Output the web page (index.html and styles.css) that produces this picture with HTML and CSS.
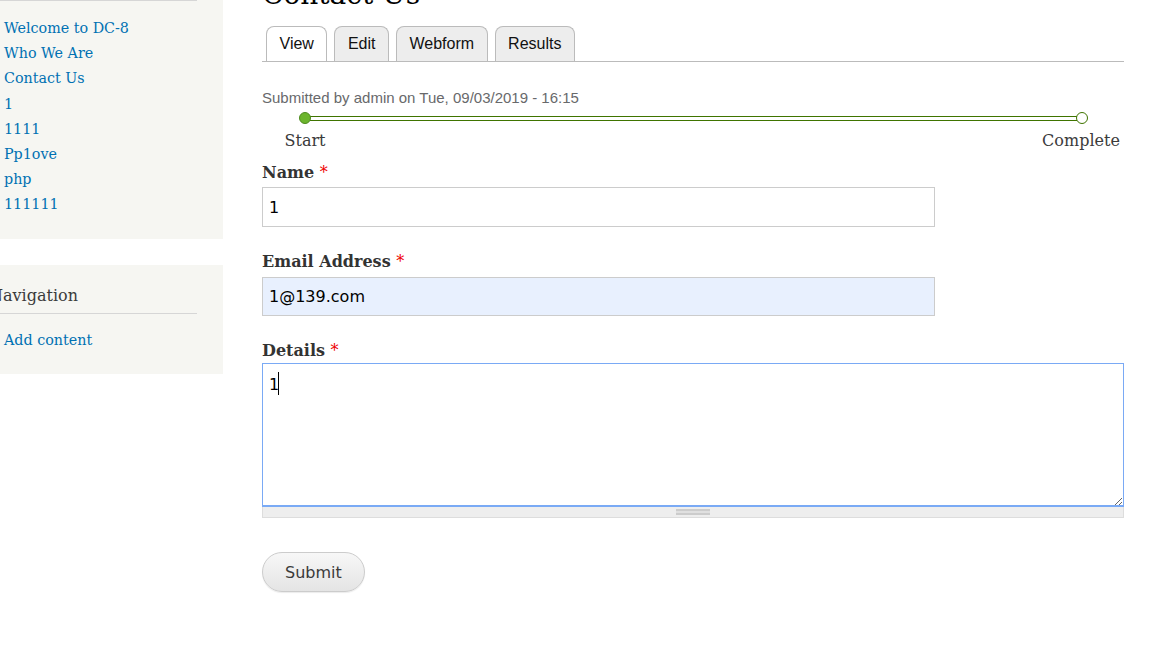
FILE: index.html
```html
<!DOCTYPE html>
<html lang="en">
<head>
<meta charset="utf-8">
<title>Contact Us | DC-8</title>
<link rel="stylesheet" href="styles.css">
</head>
<body>
<div class="page">
  <aside class="sidebar">
    <div class="block block-menu">
      <div class="block-rule"></div>
      <ul class="menu">
        <li><a href="#">Welcome to DC-8</a></li>
        <li><a href="#">Who We Are</a></li>
        <li><a href="#">Contact Us</a></li>
        <li><a href="#">1</a></li>
        <li><a href="#">1111</a></li>
        <li><a href="#">Pp1ove</a></li>
        <li><a href="#">php</a></li>
        <li><a href="#">111111</a></li>
      </ul>
    </div>
    <div class="block block-nav">
      <h2 class="block-title">Navigation</h2>
      <ul class="menu">
        <li><a href="#">Add content</a></li>
      </ul>
    </div>
  </aside>
  <main class="main">
    <h1 class="page-title">Contact Us</h1>
    <ul class="tabs">
      <li class="tab active"><a href="#">View</a></li>
      <li class="tab"><a href="#">Edit</a></li>
      <li class="tab"><a href="#">Webform</a></li>
      <li class="tab"><a href="#">Results</a></li>
    </ul>
    <div class="submitted">Submitted by admin on Tue, 09/03/2019 - 16:15</div>
    <div class="progress">
      <div class="progress-track">
        <span class="dot dot-done"></span>
        <span class="bar"></span>
        <span class="dot dot-todo"></span>
      </div>
      <div class="progress-labels">
        <span class="plabel">Start</span>
        <span class="plabel">Complete</span>
      </div>
    </div>
    <form class="webform">
      <div class="form-item">
        <label class="form-label">Name <span class="req">*</span></label>
        <input class="form-text" type="text" value="1">
      </div>
      <div class="form-item form-item-email">
        <label class="form-label">Email Address <span class="req">*</span></label>
        <input class="form-text autofill" type="text" value="1@139.com">
      </div>
      <div class="form-item form-item-details">
        <label class="form-label">Details <span class="req">*</span></label>
        <div class="textarea-wrap">
          <textarea class="form-textarea">1</textarea>
          <span class="caret"></span>
        </div>
        <div class="grippie"><span class="grip"></span></div>
      </div>
      <div class="actions">
        <button class="submit" type="button">Submit</button>
      </div>
    </form>
  </main>
</div>
</body>
</html>
```
FILE: styles.css
```css
html, body {
  margin: 0;
  padding: 0;
  background: #fff;
  overflow: hidden;
}
body {
  width: 1156px;
  height: 662px;
  font-family: "DejaVu Serif", Georgia, serif;
  color: #3b3b3b;
}
a {
  color: #0071b3;
  text-decoration: none;
}
ul {
  list-style: none;
  margin: 0;
  padding: 0;
}
.page {
  display: flex;
  align-items: flex-start;
  margin-left: -20px;
  gap: 39px;
}
.sidebar {
  width: 243px;
  flex: none;
  display: flex;
  flex-direction: column;
  gap: 26px;
}
.block {
  background: #f6f6f2;
  padding: 0 26px 0 12px;
}
.block-menu {
  padding-bottom: 21px;
}
.block-rule {
  border-top: 1px solid #d6d6d6;
}
.menu {
  padding-left: 12px;
  margin-top: 15px;
  font-size: 14.3px;
  line-height: 25.2px;
}
.block-nav {
  padding-top: 19px;
  padding-bottom: 21px;
}
.block-title {
  margin: 0;
  font-weight: normal;
  font-size: 16px;
  line-height: 24px;
  padding-bottom: 5px;
  border-bottom: 1px solid #d6d6d6;
  color: #3b3b3b;
  text-indent: -3px;
}
.block-nav .menu {
  margin-top: 14px;
}
.main {
  width: 862px;
  flex: none;
}
.page-title {
  margin: -22px 0 14px;
  font-size: 28px;
  line-height: 34px;
  font-weight: normal;
  color: #000;
}
.tabs {
  display: flex;
  gap: 7px;
  padding-left: 4px;
  border-bottom: 1px solid #bbb;
  font-family: "Liberation Sans", Arial, sans-serif;
  font-size: 16px;
}
.tab {
  border: 1px solid #bbb;
  border-bottom: none;
  border-radius: 8px 8px 0 0;
  background: #ededed;
}
.tab a {
  display: block;
  padding: 0 12.5px;
  line-height: 34px;
  color: #111;
}
.tab.active {
  background: #fff;
}
.submitted {
  margin-top: 26px;
  font-family: "Liberation Sans", Arial, sans-serif;
  font-size: 15px;
  line-height: 20px;
  color: #68696b;
}
.progress {
  margin-top: 4px;
}
.progress-track {
  display: flex;
  align-items: center;
  height: 12px;
  padding: 0 36px 0 37px;
}
.bar {
  flex: 1;
  height: 3px;
  border-top: 1px solid #3f7400;
  border-bottom: 1px solid #3f7400;
  background: #fff;
  margin: 0 -1px;
}
.dot {
  width: 10px;
  height: 10px;
  border-radius: 50%;
  border: 1px solid #3f7400;
  flex: none;
  position: relative;
  z-index: 1;
}
.dot-done {
  background: #6cb52d;
  border-color: #4d8a1e;
}
.dot-todo {
  background: #fff;
}
.progress-labels {
  display: flex;
  justify-content: space-between;
  margin-top: 7px;
}
.plabel {
  width: 86px;
  text-align: center;
  font-size: 16px;
  line-height: 20px;
  color: #3b3b3b;
}
.webform {
  margin-top: 12px;
}
.form-item {
  margin-bottom: 25px;
}
.form-label {
  display: block;
  font-weight: bold;
  font-size: 16px;
  line-height: 20px;
  margin-bottom: 4px;
  color: #333;
}
.form-item-email .form-label {
  margin-bottom: 5px;
}
.form-item-details .form-label {
  margin-bottom: 2px;
}
.req {
  color: #e00;
  font-weight: normal;
}
.form-text {
  box-sizing: border-box;
  display: block;
  width: 673px;
  height: 40px;
  margin: 0;
  padding: 0 6px;
  border: 1px solid #ccc;
  border-radius: 0;
  background: #fff;
  font-family: "DejaVu Sans", Verdana, sans-serif;
  font-size: 16px;
  color: #000;
  outline: none;
}
.form-text.autofill {
  height: 39px;
  background: #e8f0fe;
}
.textarea-wrap {
  position: relative;
}
.form-textarea {
  box-sizing: border-box;
  display: block;
  width: 862px;
  height: 144px;
  margin: 0;
  padding: 11px 6px 10px;
  border: 1px solid #7aaaf5;
  box-shadow: inset 0 -1px 0 #7aaaf5;
  border-radius: 0;
  font-family: "DejaVu Sans", Verdana, sans-serif;
  font-size: 16px;
  line-height: 20px;
  color: #000;
  resize: vertical;
  outline: none;
}
.caret {
  position: absolute;
  left: 16px;
  top: 9px;
  width: 1px;
  height: 23px;
  background: #000;
}
.grippie {
  box-sizing: border-box;
  height: 11px;
  background: #eee;
  border: 1px solid #ddd;
  border-top: none;
  display: flex;
  justify-content: center;
  align-items: center;
}
.grip {
  width: 34px;
  height: 2px;
  border-top: 2px solid #ccc;
  border-bottom: 2px solid #ccc;
  background: #e0e0e0;
}
.actions {
  margin-top: 34px;
}
.submit {
  height: 40px;
  padding: 0 22px;
  border: 1px solid #ccc;
  border-radius: 20px;
  background: linear-gradient(#f7f7f7, #e4e4e4);
  font-family: "DejaVu Sans", Verdana, sans-serif;
  font-size: 16px;
  color: #3a3a3a;
  box-shadow: 0 1px 1px rgba(0,0,0,0.08);
}
```
